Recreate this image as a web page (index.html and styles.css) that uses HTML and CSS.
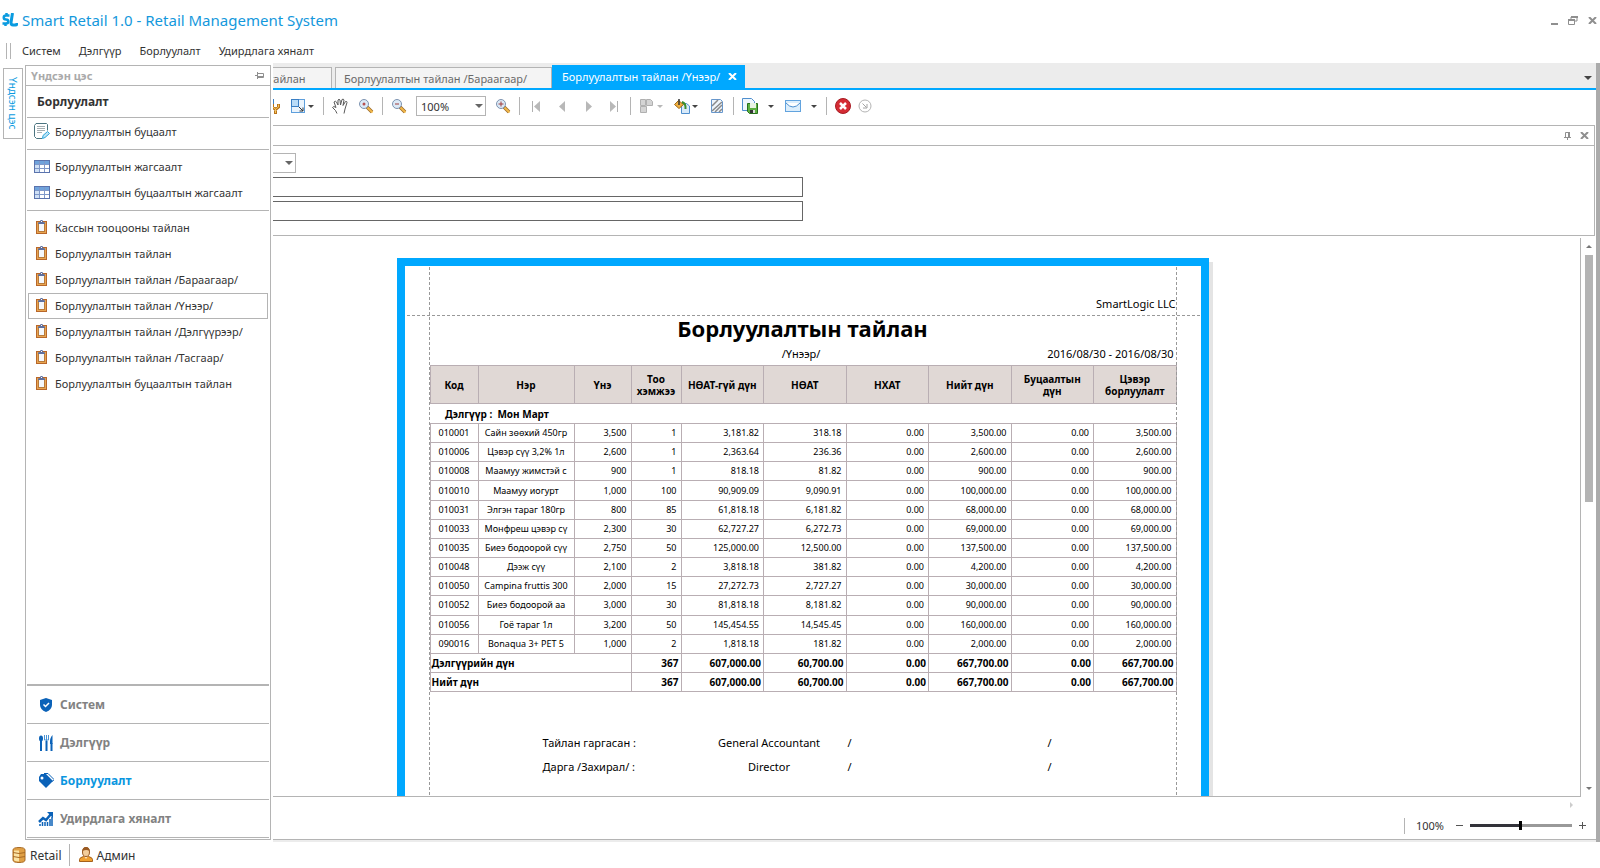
FILE: index.html
```html
<!DOCTYPE html>
<html lang="mn">
<head>
    <meta charset="UTF-8">
    <meta name="viewport" content="width=device-width, initial-scale=1.0">
    <title>Smart Retail 1.0 - Retail Management System</title>
    <link rel="stylesheet" href="styles.css">
</head>
<body>
    <!-- shared icons -->
    <svg class="sprite" width="0" height="0">
        <symbol id="i-clipboard" viewBox="0 0 16 16">
            <rect x="2" y="2" width="11" height="13" fill="#b8672a"/>
            <rect x="3" y="3" width="9" height="11" fill="#e8a550"/>
            <rect x="4" y="4" width="7" height="9" fill="#b87a3c"/>
            <rect x="5" y="4" width="5" height="8" fill="#f4f7fb"/>
            <path d="M4 5h7V3.500L9 3 8.500 1h-2L6 3l-2 .5z" fill="#5d6f9e"/>
            <rect x="7" y="2" width="1" height="1" fill="#fff"/>
        </symbol>
        <symbol id="i-table" viewBox="0 -2 16 16">
            <rect x=".5" y=".5" width="15" height="12" fill="#fff" stroke="#5a73ad"/>
            <rect x="1" y="1" width="14" height="3" fill="#6fa3dc"/>
            <rect x="1" y="4" width="4" height="8" fill="#cfe0f5"/>
            <path d="M1 4.500h14M1 8.500h14M5.500 1v11M10.500 1v11" stroke="#7f98c9" fill="none"/>
        </symbol>
        <symbol id="i-doc-edit" viewBox="0 0 16 16">
            <path d="M8 15.500H2.500l-2-2V2.500L2 .5h10.500l1 1v6" fill="#fff" stroke="#4b7480"/>
            <path d="M3 3.500h8M3 5.500h8M3 7.500h8M3 9.500h5" stroke="#a4aeb2" fill="none"/>
            <path d="M8.500 15.500l.5-3 4.500-4 2 2-4.500 4z" fill="#bfe4f5" stroke="#2aa5dc"/>
        </symbol>
        <symbol id="i-lens" viewBox="0 0 16 16">
            <path d="M9 9l5 5" stroke="#9a6a2e" stroke-width="3.500"/>
            <path d="M9.500 9.500l5 5" stroke="#f2b94a" stroke-width="2"/>
            <circle cx="6" cy="6" r="4.500" fill="#dceaf7" stroke="#7d93b0"/>
        </symbol>
        <symbol id="i-cross" viewBox="0 0 9 7">
            <path d="M1 0l7 7M8 0L1 7" stroke="currentColor" stroke-width="2" fill="none"/>
        </symbol>
    </svg>

    <header class="titlebar">
        <svg class="logo" width="16" height="14" viewBox="0 0 16 14">
            <path d="M7.500 2.500H4C1 2.500 1 6.500 4 6.500s3 4 0 4H.5M4.500 0v2M3.500 11v2" stroke="#0a9be0" stroke-width="2.500" fill="none"/>
            <path d="M10.500 0L9 9.500q0 2.500 2 2.500h2.500q1.500 0 1.500-2" stroke="#0a9be0" stroke-width="3" fill="none"/>
        </svg>
        <h1>Smart Retail 1.0 - Retail Management System</h1>
        <div class="window-buttons">
            <button type="button" aria-label="Minimize"><svg width="7" height="9" viewBox="0 0 7 9"><path d="M0 7h7v2H0z" fill="#8f8f8f"/></svg></button>
            <button type="button" aria-label="Restore"><svg width="10" height="9" viewBox="0 0 10 9"><path d="M3 3V1h6v4H7" fill="none" stroke="#8f8f8f"/><path d="M3 0h7v2H3zM0 3h7v2H0z" fill="#8f8f8f"/><path d="M.5 4v4.500h6V4" fill="none" stroke="#8f8f8f"/></svg></button>
            <button type="button" aria-label="Close"><svg width="9" height="7"><use href="#i-cross"/></svg></button>
        </div>
    </header>

    <nav class="menubar">
        <a href="#">Систем</a>
        <a href="#">Дэлгүүр</a>
        <a href="#">Борлуулалт</a>
        <a href="#">Удирдлага хяналт</a>
    </nav>

    <div class="workspace">
        <div class="dock">
            <button type="button" class="dock-tab">Үндсэн цэс</button>
        </div>

        <aside class="flyout">
            <div class="panel">
                <div class="panel-title">
                    <span>Үндсэн цэс</span>
                    <button type="button" aria-label="Pin"><svg width="9" height="7" viewBox="0 0 9 7"><path d="M0 3h3v1H0zM2 0h1v7H2z" fill="#8f8f8f"/><path d="M3 1.500h5.500v4H3" fill="none" stroke="#8f8f8f"/><path d="M3 4h5v2H3z" fill="#8f8f8f"/></svg></button>
                </div>
                <h2>Борлуулалт</h2>
                <ul class="nav-group first">
                    <li><a href="#"><svg width="16" height="16"><use href="#i-doc-edit"/></svg>Борлуулалтын буцаалт</a></li>
                </ul>
                <ul class="nav-group">
                    <li><a href="#"><svg width="16" height="16"><use href="#i-table"/></svg>Борлуулалтын жагсаалт</a></li>
                    <li><a href="#"><svg width="16" height="16"><use href="#i-table"/></svg>Борлуулалтын буцаалтын жагсаалт</a></li>
                </ul>
                <ul class="nav-group">
                    <li><a href="#"><svg width="16" height="16"><use href="#i-clipboard"/></svg>Кассын тооцооны тайлан</a></li>
                    <li><a href="#"><svg width="16" height="16"><use href="#i-clipboard"/></svg>Борлуулалтын тайлан</a></li>
                    <li><a href="#"><svg width="16" height="16"><use href="#i-clipboard"/></svg>Борлуулалтын тайлан /Бараагаар/</a></li>
                    <li><a href="#" class="selected"><svg width="16" height="16"><use href="#i-clipboard"/></svg>Борлуулалтын тайлан /Үнээр/</a></li>
                    <li><a href="#"><svg width="16" height="16"><use href="#i-clipboard"/></svg>Борлуулалтын тайлан /Дэлгүүрээр/</a></li>
                    <li><a href="#"><svg width="16" height="16"><use href="#i-clipboard"/></svg>Борлуулалтын тайлан /Тасгаар/</a></li>
                    <li><a href="#"><svg width="16" height="16"><use href="#i-clipboard"/></svg>Борлуулалтын буцаалтын тайлан</a></li>
                </ul>
                <div class="modules">
                    <button type="button">
                        <svg width="16" height="16" viewBox="0 0 16 16"><path d="M8 1l6 2v5q0 4.500-6 7-6-2.500-6-7V3z" fill="#0b62b8"/><path d="M5.500 7.500l2 2 3.500-3.500" stroke="#fff" stroke-width="1.500" fill="none"/></svg>Систем
                    </button>
                    <button type="button">
                        <svg width="16" height="16" viewBox="0 0 16 16"><ellipse cx="3" cy="3.500" rx="2" ry="3" fill="#0b62b8"/><path d="M3 5v11M8.500 6v10M13.500 8v8" stroke="#0b62b8" stroke-width="2"/><path d="M6.500 0v5h4V0M8.500 0v6" stroke="#4a93d4" fill="none"/><path d="M14.500 0q-3 3-2.500 9h2.500z" fill="#0b62b8"/></svg>Дэлгүүр
                    </button>
                    <button type="button" class="active">
                        <svg width="16" height="16" viewBox="0 0 16 16"><path d="M3 1h5l7 7-7 7-7-7V4z" fill="#0b62b8"/><path d="M6 .5h4l6 6-1.500 2" fill="none" stroke="#0b62b8"/><circle cx="4" cy="5" r="1.500" fill="#fff"/></svg>Борлуулалт
                    </button>
                    <button type="button">
                        <svg width="16" height="16" viewBox="0 0 16 16"><path d="M1 11l4-4 3 2 5-6" stroke="#0b62b8" stroke-width="2.500" fill="none"/><path d="M9 1h6v6z" fill="#0b62b8"/><path d="M2 13v2M4.500 11v4M7 11v4M9.500 11v4M12 8v7M14 6v9" stroke="#0b62b8" stroke-width="1.500"/></svg>Удирдлага хяналт
                    </button>
                </div>
            </div>
        </aside>

        <main class="content">
            <div class="tabs">
                <button type="button" class="tab tab-first">Борлуулалтын тайлан</button>
                <button type="button" class="tab">Борлуулалтын тайлан /Бараагаар/</button>
                <button type="button" class="tab current">Борлуулалтын тайлан /Үнээр/<svg width="9" height="7"><use href="#i-cross"/></svg></button>
                <button type="button" class="tab-list" aria-label="Window list"><i class="caret large"></i></button>
            </div>

            <div class="toolbar">
                <button type="button" aria-label="Page setup"><svg width="16" height="16" viewBox="0 0 16 16"><path d="M9 1v5" stroke="#3b7fc4" stroke-width="2"/><path d="M8.500 6v3l3 2.500 3-2.500V6M11.500 11v5" stroke="#b8741c" stroke-width="3" fill="none"/><path d="M8.500 6.500v2.500l3 2 3-2V6.500M11.500 11v4" stroke="#f7c55a" fill="none"/></svg></button>
                <button type="button" class="drop" aria-label="Scale"><svg width="16" height="16" viewBox="0 0 16 16"><rect x="1.500" y="1.500" width="13" height="13" fill="#eaf4fd" stroke="#5e9fdc"/><rect x="1.500" y="1.500" width="7" height="7" fill="#b9dcf8" stroke="#3b7fc4"/><path d="M9 9l4 4M13 9.500v3.500H9.500" stroke="#333" fill="none"/></svg><i class="caret"></i></button>
                <span class="sep"></span>
                <button type="button" aria-label="Hand tool"><svg width="16" height="16" viewBox="0 0 16 16"><path d="M5 15.500L3.500 12.500.500 9.500Q1.500 7.500 4 9.500L2 4q1.500-1.500 2.500 0L6 7V2q1-1.500 2 0l.5 5L10 1.500q1.500-1 2 .5l-1 5.500 2.500-4q1.500-.5 1.500 1L13 11l-1 4.500" fill="#fff" stroke="#5a5a5a"/></svg></button>
                <button type="button" aria-label="Magnifier"><svg width="16" height="16"><use href="#i-lens"/><circle cx="6" cy="6" r="1.500" fill="#b55050"/></svg></button>
                <span class="sep"></span>
                <button type="button" aria-label="Zoom out"><svg width="16" height="16"><use href="#i-lens"/><path d="M4 6h4" stroke="#a03c3c" stroke-width="1"/></svg></button>
                <span class="select zoom-select">
                    <select aria-label="Zoom"><option>100%</option></select>
                    <i class="caret"></i>
                </span>
                <button type="button" aria-label="Zoom in"><svg width="16" height="16"><use href="#i-lens"/><path d="M3.500 6h5M6 3.500v5" stroke="#a03c3c"/></svg></button>
                <span class="sep"></span>
                <button type="button" aria-label="First page"><svg width="16" height="16" viewBox="0 0 16 16"><path d="M4.500 3v11" stroke="#b0b0b0"/><path d="M12 3v11L6 8.500z" fill="#b8b8b8"/></svg></button>
                <button type="button" aria-label="Previous page"><svg width="16" height="16" viewBox="0 0 16 16"><path d="M11 3v11L5 8.500z" fill="#b8b8b8"/></svg></button>
                <button type="button" aria-label="Next page"><svg width="16" height="16" viewBox="0 0 16 16"><path d="M6 3v11l6-5.500z" fill="#b8b8b8"/></svg></button>
                <button type="button" aria-label="Last page"><svg width="16" height="16" viewBox="0 0 16 16"><path d="M11.500 3v11" stroke="#b0b0b0"/><path d="M4 3v11l6-5.500z" fill="#b8b8b8"/></svg></button>
                <span class="sep"></span>
                <button type="button" class="drop" aria-label="Multiple pages"><svg width="16" height="16" viewBox="0 0 16 16"><path d="M1.500 1.500h5v6h-5zM7.500 1.500h4l2 2v4h-6zM1.500 8.500h6v6h-6z" fill="#d4d4d4" stroke="#b0b0b0"/></svg><i class="caret light"></i></button>
                <button type="button" class="drop" aria-label="Background color"><svg width="16" height="16" viewBox="0 0 16 16"><path d="M7.500 5.500h5l3 2.500v7.500h-8z" fill="#d8eafa" stroke="#4f8fce"/><path d="M.5 6.500l4-4 5 4-4.500 4z" fill="#f0b040" stroke="#a06a18"/><path d="M5 7V1" stroke="#333" stroke-width="1.500"/><path d="M8 4q4 1 3.500 7" stroke="#3b8f2d" stroke-width="2" fill="none"/></svg><i class="caret"></i></button>
                <button type="button" aria-label="Watermark"><svg width="16" height="16" viewBox="0 0 16 16"><path d="M2.500 1.500h9l2 2v11h-11z" fill="#eef5fc" stroke="#6797cd"/><path d="M3 8l6-6M3 13l10-9M6 14l7-7M10 14l3-3" stroke="#8a8a8a" stroke-width="1.500"/></svg></button>
                <span class="sep"></span>
                <button type="button" class="drop wide" aria-label="Export"><svg width="16" height="16" viewBox="0 0 16 16"><path d="M.5.5h9l3 3v9H.5z" fill="#eef6fd" stroke="#4f8fce"/><path d="M5.500 5.500h10v10h-8l-2-2z" fill="#5cb040" stroke="#28701c"/><path d="M8 5h6v5H8z" fill="#e8f3e2"/><path d="M8 12h5v3H8z" fill="#333"/><path d="M11 12h2v3h-2z" fill="#ddd"/></svg><i class="caret"></i></button>
                <button type="button" class="drop wide" aria-label="Send by e-mail"><svg width="16" height="16" viewBox="0 0 16 16"><rect x=".5" y="2.500" width="15" height="11" fill="#dceefc" stroke="#62a3de"/><path d="M1 5q7 8 14 0" fill="#fff" stroke="#4b8fd0"/></svg><i class="caret"></i></button>
                <span class="sep"></span>
                <span class="button-pair">
                    <button type="button" aria-label="Close preview"><svg width="16" height="16" viewBox="0 0 16 16"><circle cx="8" cy="8" r="7.500" fill="#d42c34" stroke="#a81c24"/><path d="M5 5l6 6M11 5l-6 6" stroke="#fff" stroke-width="2.500"/></svg></button>
                    <button type="button" aria-label="More" class="small"><svg width="14" height="14" viewBox="0 0 14 14"><circle cx="7" cy="7" r="6" fill="#fff" stroke="#b4b4b4"/><path d="M4.500 4.500l4 4M9 5v4H5" stroke="#a4a4a4" fill="none"/></svg></button>
                </span>
            </div>

            <section class="params">
                <div class="params-head">
                    <button type="button" aria-label="Auto hide"><svg width="7" height="8" viewBox="0 0 7 8"><path d="M0 5h7v1H0zM3 6h1v2H3zM4 0h2v5H4z" fill="#8f8f8f"/><path d="M1.500 5V.5h4V5" fill="none" stroke="#8f8f8f"/></svg></button>
                    <button type="button" aria-label="Close parameters"><svg width="9" height="7"><use href="#i-cross"/></svg></button>
                </div>
                <div class="params-body">
                    <span class="select">
                        <select aria-label="Дэлгүүр"><option></option></select>
                        <i class="caret"></i>
                    </span>
                    <input type="text" aria-label="Эхлэх огноо">
                    <input type="text" aria-label="Дуусах огноо">
                </div>
            </section>

            <div class="preview">
                <div class="viewport">
                    <article class="paper">
                        <i class="guide guide-left"></i>
                        <i class="guide guide-right"></i>
                        <i class="guide guide-top"></i>
                        <p class="company">SmartLogic LLC</p>
                        <h3>Борлуулалтын тайлан</h3>
                        <div class="subtitle">
                            <span class="kind">/Үнээр/</span>
                            <span class="period">2016/08/30 - 2016/08/30</span>
                        </div>
                        <table>
                            <colgroup>
                                <col class="c-code"><col class="c-name"><col class="c-price"><col class="c-qty">
                                <col><col><col><col><col><col>
                            </colgroup>
                            <thead>
                                <tr>
                                    <th>Код</th><th>Нэр</th><th>Үнэ</th><th>Тоо хэмжээ</th><th>НӨАТ-гүй дүн</th>
                                    <th>НӨАТ</th><th>НХАТ</th><th>Нийт дүн</th><th>Буцаалтын дүн</th><th>Цэвэр борлуулалт</th>
                                </tr>
                            </thead>
                            <tbody>
                                <tr class="store"><th colspan="10">Дэлгүүр :&nbsp; Мон Март</th></tr>
                                <tr><td>010001</td><td>Сайн зөөхий 450гр</td><td>3,500</td><td>1</td><td>3,181.82</td><td>318.18</td><td>0.00</td><td>3,500.00</td><td>0.00</td><td>3,500.00</td></tr>
                                <tr><td>010006</td><td>Цэвэр сүү 3,2% 1л</td><td>2,600</td><td>1</td><td>2,363.64</td><td>236.36</td><td>0.00</td><td>2,600.00</td><td>0.00</td><td>2,600.00</td></tr>
                                <tr><td>010008</td><td>Маамуу жимстэй с</td><td>900</td><td>1</td><td>818.18</td><td>81.82</td><td>0.00</td><td>900.00</td><td>0.00</td><td>900.00</td></tr>
                                <tr><td>010010</td><td>Маамуу иогурт</td><td>1,000</td><td>100</td><td>90,909.09</td><td>9,090.91</td><td>0.00</td><td>100,000.00</td><td>0.00</td><td>100,000.00</td></tr>
                                <tr><td>010031</td><td>Элгэн тараг 180гр</td><td>800</td><td>85</td><td>61,818.18</td><td>6,181.82</td><td>0.00</td><td>68,000.00</td><td>0.00</td><td>68,000.00</td></tr>
                                <tr><td>010033</td><td>Монфреш цэвэр сү</td><td>2,300</td><td>30</td><td>62,727.27</td><td>6,272.73</td><td>0.00</td><td>69,000.00</td><td>0.00</td><td>69,000.00</td></tr>
                                <tr><td>010035</td><td>Биеэ бодоорой сүү</td><td>2,750</td><td>50</td><td>125,000.00</td><td>12,500.00</td><td>0.00</td><td>137,500.00</td><td>0.00</td><td>137,500.00</td></tr>
                                <tr><td>010048</td><td>Дээж сүү</td><td>2,100</td><td>2</td><td>3,818.18</td><td>381.82</td><td>0.00</td><td>4,200.00</td><td>0.00</td><td>4,200.00</td></tr>
                                <tr><td>010050</td><td>Campina fruttis 300</td><td>2,000</td><td>15</td><td>27,272.73</td><td>2,727.27</td><td>0.00</td><td>30,000.00</td><td>0.00</td><td>30,000.00</td></tr>
                                <tr><td>010052</td><td>Биеэ бодоорой аа</td><td>3,000</td><td>30</td><td>81,818.18</td><td>8,181.82</td><td>0.00</td><td>90,000.00</td><td>0.00</td><td>90,000.00</td></tr>
                                <tr><td>010056</td><td>Гоё тараг 1л</td><td>3,200</td><td>50</td><td>145,454.55</td><td>14,545.45</td><td>0.00</td><td>160,000.00</td><td>0.00</td><td>160,000.00</td></tr>
                                <tr><td>090016</td><td>Bonaqua 3+ PET 5</td><td>1,000</td><td>2</td><td>1,818.18</td><td>181.82</td><td>0.00</td><td>2,000.00</td><td>0.00</td><td>2,000.00</td></tr>
                            </tbody>
                            <tfoot>
                                <tr><th colspan="3">Дэлгүүрийн дүн</th><td>367</td><td>607,000.00</td><td>60,700.00</td><td>0.00</td><td>667,700.00</td><td>0.00</td><td>667,700.00</td></tr>
                                <tr><th colspan="3">Нийт дүн</th><td>367</td><td>607,000.00</td><td>60,700.00</td><td>0.00</td><td>667,700.00</td><td>0.00</td><td>667,700.00</td></tr>
                            </tfoot>
                        </table>
                        <div class="signatures">
                            <span>Тайлан гаргасан :</span><span class="role">General Accountant</span><span>/</span><span>/</span>
                            <span>Дарга /Захирал/ :</span><span class="role">Director</span><span>/</span><span>/</span>
                        </div>
                    </article>
                </div>
                <div class="scrollbar">
                    <i class="arrow-up"></i>
                    <i class="thumb"></i>
                    <i class="arrow-down"></i>
                </div>
            </div>

            <div class="zoombar">
                <i class="arrow-right"></i>
                <div class="zoom-controls">
                    <label for="zoom">100%</label>
                    <button type="button" aria-label="Smaller"><svg width="7" height="7" viewBox="0 0 7 7"><path d="M0 3.500h7" stroke="#555"/></svg></button>
                    <input type="range" id="zoom" min="0" max="100" value="49">
                    <button type="button" aria-label="Larger"><svg width="7" height="7" viewBox="0 0 7 7"><path d="M0 3.500h7M3.500 0v7" stroke="#555"/></svg></button>
                </div>
            </div>
        </main>
    </div>

    <footer class="statusbar">
        <span>
            <svg width="14" height="16" viewBox="0 0 14 16"><path d="M1 3q0-2.500 6-2.500T13 3v10q0 2.500-6 2.500T1 13z" fill="#e0a045" stroke="#a86a24"/><path d="M2 3.500h5v11Q2 14 2 13z" fill="#fbe3a4"/><path d="M1 5.500q6 2 12 0M1 9.500q6 2 12 0" stroke="#a86a24" fill="none"/></svg>Retail
        </span>
        <span>
            <svg width="14" height="16" viewBox="0 0 14 16"><path d="M.5 14.500v-2q0-2 4-3h5q4 1 4 3v2z" fill="#f0a030" stroke="#a5611c"/><path d="M5 9h4l-2 3z" fill="#fbe3c0"/><ellipse cx="7" cy="5" rx="3.500" ry="4.500" fill="#f3cd9a" stroke="#9a5a22"/><path d="M3.500 4q0-4 3.500-4t3.500 4q-3-2-7 0z" fill="#9a5a22"/></svg>Админ
        </span>
    </footer>
</body>
</html>
```
FILE: styles.css
```css
* {
    box-sizing: border-box;
}

body {
    margin: 0;
    height: 100vh;
    display: flex;
    flex-direction: column;
    background: #fff;
    color: #333;
    font-family: "Noto Sans", sans-serif;
    font-size: 11px;
    overflow: hidden;
}

button {
    display: flex;
    align-items: center;
    padding: 0;
    border: none;
    background: none;
    color: inherit;
    font: inherit;
    cursor: pointer;
}

a {
    color: inherit;
    text-decoration: none;
}

h1, h2, h3, p, ul {
    margin: 0;
    padding: 0;
}

.sprite {
    position: absolute;
}

/* Title and menu */
.titlebar {
    display: flex;
    align-items: center;
    height: 40px;
    padding: 0 3px 0 2px;
}

.titlebar h1 {
    flex: 1;
    margin-left: 4px;
    color: #1498dc;
    font-size: 15px;
    font-weight: normal;
}

.window-buttons {
    display: flex;
    gap: 10px;
    color: #8f8f8f;
}

.menubar {
    display: flex;
    align-items: center;
    gap: 18px;
    height: 23px;
    padding: 0 6px 2px;
}

.menubar::before {
    content: "";
    width: 3px;
    height: 16px;
    margin-right: -7px;
    border: solid #b4b4b4;
    border-width: 0 1px;
}

/* Workspace */
.workspace {
    flex: 1;
    display: flex;
    min-height: 0;
    position: relative;
}

.dock {
    width: 25px;
    padding: 5px 2px 0 3px;
}

.dock-tab {
    justify-content: center;
    width: 20px;
    height: 71px;
    border: 1px solid #b4b4b4;
    color: #0a9be0;
    font-size: 10px;
    writing-mode: vertical-rl;
}

/* Main menu slides over the report */
.flyout {
    position: absolute;
    top: 0;
    bottom: 0;
    left: 25px;
    z-index: 2;
    display: flex;
    width: 248px;
    padding: 2px 2px 2px 0;
    background: #fff;
}

.panel {
    flex: 1;
    display: flex;
    flex-direction: column;
    border: 1px solid #b4b4b4;
}

.panel-title {
    display: flex;
    align-items: center;
    justify-content: space-between;
    height: 20px;
    padding: 0 6px 0 5px;
    border-bottom: 1px solid #b4b4b4;
    color: #aaa;
    font-weight: bold;
}

.panel h2 {
    height: 32px;
    margin: 0 1px;
    padding-left: 10px;
    border-bottom: 1px solid #b4b4b4;
    font-size: 12px;
    line-height: 32px;
}

.nav-group {
    margin: 0 1px;
    padding: 4px 1px;
    list-style: none;
}

.nav-group.first {
    padding-top: 1px;
}

.nav-group + .nav-group {
    border-top: 1px solid #b4b4b4;
}

.nav-group a {
    display: flex;
    align-items: center;
    gap: 5px;
    height: 26px;
    padding: 0 0 2px 5px;
    border: 1px solid transparent;
}

.nav-group a.selected {
    border-color: #b4b4b4;
}

.modules {
    margin: auto 1px 1px;
    border-top: 2px solid #b4b4b4;
}

.modules button {
    gap: 6px;
    width: 100%;
    height: 38px;
    padding-left: 11px;
    border-bottom: 1px solid #b4b4b4;
    color: #828282;
    font-size: 12px;
    font-weight: bold;
}

.modules .active {
    color: #0a96e0;
}

/* Report window */
.content {
    flex: 1;
    display: flex;
    flex-direction: column;
    min-width: 0;
    border-right: 4px solid #ababab;
    box-shadow: inset 0 -2px #ececec;
}

.tabs {
    display: flex;
    align-items: flex-end;
    gap: 3px;
    height: 27px;
    padding-left: 159px;
    border-bottom: 2px solid #00a8ff;
    background: #ececec;
}

.tab {
    width: 217px;
    height: 21px;
    padding-left: 8px;
    border: 1px solid #b4b4b4;
    border-bottom: none;
    background: #f4f4f4;
    color: #6a6a6a;
    white-space: nowrap;
}

.tab-first {
    width: 148px;
    padding-left: 4px;
}

.tab.current {
    justify-content: space-between;
    width: 193px;
    height: 23px;
    margin-left: -3px;
    padding: 0 8px 0 10px;
    border: none;
    background: #00a8ff;
    color: #fff;
}

.tab-list {
    height: 21px;
    margin-left: auto;
    padding-right: 4px;
    color: #444;
}

.caret {
    width: 0;
    height: 0;
    border: solid transparent;
    border-width: 3px 3px 0;
    border-top-color: #444;
}

.caret.large {
    border-width: 4px 4px 0;
}

.caret.light {
    border-top-color: #b8b8b8;
}

.toolbar {
    display: flex;
    align-items: center;
    gap: 2px;
    height: 35px;
    padding: 0 0 3px 235px;
}

.toolbar button {
    justify-content: center;
    flex: none;
    width: 24px;
    height: 24px;
}

.toolbar .drop {
    justify-content: flex-start;
    gap: 2px;
    width: 33px;
    padding-left: 4px;
}

.toolbar .wide {
    gap: 10px;
    width: 41px;
}

.toolbar .small {
    width: 20px;
}

.button-pair {
    display: flex;
}

.sep {
    width: 1px;
    height: 18px;
    margin: 0 2px;
    background: #b4b4b4;
}

.select {
    position: relative;
    display: block;
}

.select select {
    display: block;
    width: 100%;
    height: 20px;
    padding: 0 4px;
    border: 1px solid #b4b4b4;
    border-radius: 0;
    background: #fff;
    color: #333;
    font: inherit;
    appearance: none;
}

.select .caret {
    position: absolute;
    top: 8px;
    right: 3px;
    border-width: 4px 4px 0;
    border-top-color: #666;
}

.zoom-select {
    width: 70px;
    margin: 0 3px;
}

.params {
    margin-right: 1px;
    border: 1px solid #b4b4b4;
}

.params-head {
    display: flex;
    align-items: center;
    justify-content: flex-end;
    gap: 9px;
    height: 20px;
    padding-right: 5px;
    border-bottom: 1px solid #b4b4b4;
    color: #8f8f8f;
}

.params-body {
    height: 89px;
    padding: 7px 10px;
}

.params-body .select {
    width: 260px;
    margin-bottom: 4px;
}

.params-body input {
    display: block;
    width: 767px;
    height: 20px;
    margin-bottom: 4px;
    border: 1px solid #666;
}

.preview {
    flex: 1;
    display: flex;
    min-height: 0;
    padding-top: 2px;
}

.viewport {
    flex: 1;
    overflow: hidden;
    padding-top: 20px;
    border: solid #b4b4b4;
    border-width: 0 1px 1px 0;
}

.scrollbar {
    display: flex;
    flex-direction: column;
    align-items: center;
    width: 15px;
    padding: 7px 0;
}

.scrollbar .thumb {
    width: 8px;
    height: 247px;
    margin: 7px 0 auto;
    background: #b4b4b4;
}

.arrow-up, .arrow-down, .arrow-right {
    border: 3px solid transparent;
}

.arrow-up {
    border-top: none;
    border-bottom-color: #777;
}

.arrow-down {
    border-bottom: none;
    border-top-color: #777;
}

.arrow-right {
    border-right: none;
    border-left-color: #ccc;
}

/* Printed page */
.paper {
    position: relative;
    width: 812px;
    height: 1140px;
    margin: 0 auto;
    padding: 0 24px;
    border: 8px solid #00a8ff;
    box-shadow: 4px 4px #e4e4e4;
    color: #000;
}

.guide {
    position: absolute;
}

.guide-left, .guide-right {
    top: 1px;
    bottom: 1px;
    width: 1px;
    background: repeating-linear-gradient(#999 0 3px, transparent 3px 5px);
}

.guide-left {
    left: 24px;
}

.guide-right {
    right: 24px;
}

.guide-top {
    top: 49px;
    left: 2px;
    right: 1px;
    height: 1px;
    background: repeating-linear-gradient(90deg, #999 0 3px, transparent 3px 5px);
}

.company {
    padding: 28px 1px 0 0;
    font-size: 11px;
    line-height: 20px;
    text-align: right;
}

.paper h3 {
    padding-bottom: 2px;
    font-size: 22px;
    line-height: 28px;
    text-align: center;
}

.subtitle {
    display: grid;
    grid-template-columns: 1fr auto 1fr;
    padding-right: 3px;
    line-height: 20px;
}

.kind {
    grid-column: 2;
}

.period {
    text-align: right;
}

table {
    width: 747px;
    height: 327px;
    margin: 1px 0 0 1px;
    border-collapse: collapse;
    table-layout: fixed;
    font-size: 9px;
    line-height: 12px;
}

th, td {
    padding: 0 4px 0 2px;
    border: 1px solid #b9aeb3;
    text-align: right;
    white-space: nowrap;
}

.c-code {
    width: 48px;
}

.c-name {
    width: 96px;
}

.c-price {
    width: 57px;
}

.c-qty {
    width: 50px;
}

thead th {
    height: 38px;
    padding: 0 2px;
    background: #e0d8d5;
    font-size: 10px;
    text-align: center;
    white-space: normal;
}

td:nth-child(1), td:nth-child(2) {
    padding: 0 2px;
    text-align: center;
}

.store th {
    height: 20px;
    padding-left: 15px;
    border-left: none;
    border-right: none;
    font-size: 10px;
    text-align: left;
}

tfoot th, tfoot td:nth-child(n) {
    height: 19px;
    padding: 0 2px 0 1px;
    font-size: 10px;
    font-weight: bold;
    text-align: right;
}

tfoot th:first-child {
    text-align: left;
}

.signatures {
    display: grid;
    grid-template-columns: 148px 157px 200px 1fr;
    padding: 39px 0 0 114px;
    line-height: 24px;
}

.signatures .role {
    text-align: center;
}

/* Bottom of the report window */
.zoombar {
    display: flex;
    flex-direction: column;
    height: 45px;
}

.zoombar .arrow-right {
    align-self: flex-end;
    margin: 5px 23px 4px 0;
}

.zoom-controls {
    display: flex;
    align-items: center;
    justify-content: flex-end;
    gap: 7px;
    height: 28px;
    padding-right: 10px;
    border-bottom: 1px solid #b4b4b4;
}

.zoom-controls label {
    padding: 0 5px 0 11px;
    border-left: 1px solid #b4b4b4;
    font-size: 11px;
    line-height: 16px;
}

.zoom-controls input {
    width: 102px;
    height: 12px;
    margin: 0;
    background: linear-gradient(90deg, #33333a 50%, #999 50%) center / 100% 3px no-repeat;
    appearance: none;
}

.zoom-controls input::-webkit-slider-thumb {
    width: 3px;
    height: 9px;
    background: #000;
    appearance: none;
}

.statusbar {
    display: flex;
    align-items: center;
    height: 26px;
    padding-left: 12px;
    font-size: 12px;
}

.statusbar span {
    display: flex;
    align-items: center;
    gap: 4px;
    height: 22px;
}

.statusbar span + span {
    margin-left: 7px;
    padding-left: 9px;
    border-left: 1px solid #b4b4b4;
}
```
